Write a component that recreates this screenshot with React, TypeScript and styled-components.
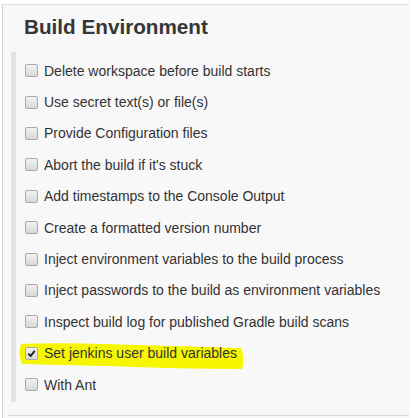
import React from "react";
import styled, { createGlobalStyle } from "styled-components";

const Global = createGlobalStyle`
  html, body { margin: 0; padding: 0; background: #ffffff; }
  body { font-family: "Liberation Sans", Arial, sans-serif; color: #333; }
`;

const Page = styled.div`
  padding: 4px 0 0 2px;
  width: 409px;
  height: 418px;
  box-sizing: border-box;
`;

const Section = styled.section`
  position: relative;
  height: 100%;
  box-sizing: border-box;
  background: #f8f8f8;
  border-top: 1px solid #dcdcdc;
  border-left: 1px solid #cfcfcf;
  display: flex;
  flex-direction: column;
`;

const Heading = styled.h2`
  margin: 0;
  padding: 10px 0 0 21px;
  font-size: 20.7px;
  line-height: 24px;
  font-weight: bold;
  color: #363636;
`;

const List = styled.div`
  margin: 13px 0 0 8px;
  border-left: 5px solid #e2e2e2;
  padding: 3px 0 2px 9px;
  display: flex;
  flex-direction: column;
`;

const Row = styled.label`
  position: relative;
  height: 31.4px;
  display: flex;
  align-items: center;
  gap: 6px;
  font-size: 14px;
  color: #333;
`;

const Box = styled.span<{ $checked?: boolean }>`
  position: relative;
  z-index: 1;
  width: 11px;
  height: 11px;
  border: 1px solid #a9a9a9;
  border-radius: 2px;
  background: linear-gradient(#f2f2f2, #d8d8d8);
  display: flex;
  align-items: center;
  justify-content: center;
  flex: none;
`;

const Label = styled.span`
  position: relative;
  z-index: 1;
`;

const Highlight = styled.svg`
  position: absolute;
  left: -7px;
  top: 2px;
  z-index: 0;
`;

const Divider = styled.div`
  margin: auto 0 0 5px;
  border-top: 1px solid #d6d6d6;
  height: 2px;
`;

const items: { text: string; checked?: boolean }[] = [
  { text: "Delete workspace before build starts" },
  { text: "Use secret text(s) or file(s)" },
  { text: "Provide Configuration files" },
  { text: "Abort the build if it's stuck" },
  { text: "Add timestamps to the Console Output" },
  { text: "Create a formatted version number" },
  { text: "Inject environment variables to the build process" },
  { text: "Inject passwords to the build as environment variables" },
  { text: "Inspect build log for published Gradle build scans" },
  { text: "Set jenkins user build variables", checked: true },
  { text: "With Ant" },
];

export default function App() {
  return (
    <>
      <Global />
      <Page>
        <Section>
          <Heading>Build Environment</Heading>
          <List>
            {items.map((it) => (
              <Row key={it.text}>
                {it.checked && (
                  <Highlight width="228" height="31" viewBox="0 0 228 31">
                    <path
                      d="M3 4 Q40 2 120 5 Q190 7 223 8 Q227 18 224 29 Q160 29 90 26 Q40 25 4 24 Q0 14 3 4 Z"
                      fill="#f6f600"
                    />
                  </Highlight>
                )}
                <Box $checked={it.checked}>
                  {it.checked && (
                    <svg width="9" height="9" viewBox="0 0 10 10">
                      <path d="M1.5 5.2 L4 7.8 L8.6 2" stroke="#222" strokeWidth="2.2" fill="none" />
                    </svg>
                  )}
                </Box>
                <Label>{it.text}</Label>
              </Row>
            ))}
          </List>
          <Divider />
        </Section>
      </Page>
    </>
  );
}
